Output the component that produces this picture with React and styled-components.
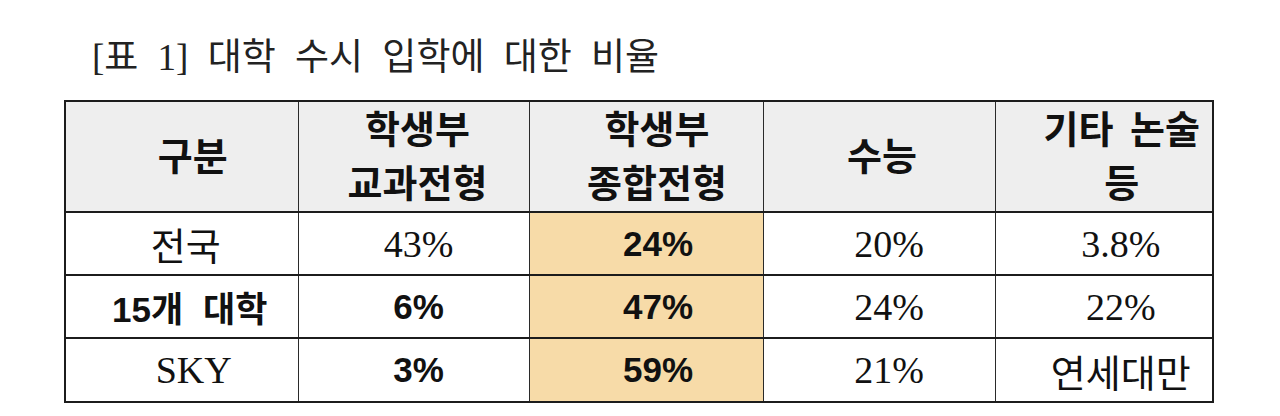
import React from "react";
import styled, { createGlobalStyle } from "styled-components";

const GlobalStyle = createGlobalStyle`
  html, body {
    margin: 0;
    padding: 0;
    background: #ffffff;
  }
`;

const Page = styled.div`
  width: 1280px;
  height: 416px;
  padding-left: 64px;
  box-sizing: border-box;
  overflow: hidden;
`;

const Title = styled.h1`
  margin: 0;
  height: 100px;
  box-sizing: border-box;
  padding: 38px 0 0 28px;
  font-family: "Liberation Serif", "Noto Sans CJK KR", serif;
  font-weight: 400;
  font-size: 37px;
  line-height: 40px;
  word-spacing: 10px;
  color: #222;
`;

const Table = styled.table`
  width: 1148px;
  table-layout: fixed;
  border-collapse: collapse;
  border: 2px solid #1c1c1c;
  color: #111;
`;

const Row = styled.tr`
  height: ${(p) => p.$h}px;
`;

const HeadCell = styled.th`
  background: #eeeeee;
  border-left: 1px solid #2a2a2a;
  border-right: 1px solid #2a2a2a;
  border-bottom: 2px solid #1c1c1c;
  padding: 0 0 0 ${(p) => p.$shift || 0}px;
  font-family: "Liberation Sans", "Noto Sans CJK KR", sans-serif;
  font-weight: 700;
  font-size: 38px;
  line-height: 54px;
  word-spacing: 6px;
  text-align: center;
  vertical-align: middle;
  white-space: nowrap;
`;

const Cell = styled.td`
  background: ${(p) => (p.$accent ? "#f7dba8" : "#ffffff")};
  border-left: 1px solid #2a2a2a;
  border-right: 1px solid #2a2a2a;
  border-bottom: 2px solid #1c1c1c;
  padding: 0 0 0 ${(p) => p.$shift || 0}px;
  font-family: ${(p) =>
    p.$bold
      ? `"Liberation Sans", "Noto Sans CJK KR", sans-serif`
      : `"Liberation Serif", "Noto Sans CJK KR", serif`};
  font-weight: ${(p) => (p.$bold ? 700 : 400)};
  font-size: ${(p) => (p.$bold ? 35 : 38)}px;
  word-spacing: ${(p) => (p.$bold ? 10 : 0)}px;
  text-align: center;
  vertical-align: middle;
  white-space: nowrap;
`;

const widths = [233, 231, 234, 232, 218];

const rows = [
  { name: "전국", nameBold: false, nameShift: 8, a: "43%", aBold: false, b: "24%", c: "20%", d: "3.8%" },
  { name: "15개 대학", nameBold: true, nameShift: 16, a: "6%", aBold: true, b: "47%", c: "24%", d: "22%" },
  { name: "SKY", nameBold: false, nameShift: 24, a: "3%", aBold: true, b: "59%", c: "21%", d: "연세대만" },
];

const App = () => {
  return (
    <Page>
      <GlobalStyle />
      <Title>[표 1] 대학 수시 입학에 대한 비율</Title>
      <Table>
        <colgroup>
          {widths.map((w, i) => (
            <col key={i} style={{ width: w }} />
          ))}
        </colgroup>
        <thead>
          <Row $h={111}>
            <HeadCell $shift={22}>구분</HeadCell>
            <HeadCell $shift={8}>
              학생부
              <br />
              교과전형
            </HeadCell>
            <HeadCell $shift={22}>
              학생부
              <br />
              종합전형
            </HeadCell>
            <HeadCell $shift={6}>수능</HeadCell>
            <HeadCell $shift={36}>
              기타 논술
              <br />
              등
            </HeadCell>
          </Row>
        </thead>
        <tbody>
          {rows.map((r, i) => (
            <Row key={i} $h={i === 2 ? 64 : 63}>
              <Cell $bold={r.nameBold} $shift={r.nameShift}>
                {r.name}
              </Cell>
              <Cell $bold={r.aBold} $shift={10}>
                {r.a}
              </Cell>
              <Cell $bold $accent $shift={24}>
                {r.b}
              </Cell>
              <Cell $shift={20}>{r.c}</Cell>
              <Cell $shift={34}>{r.d}</Cell>
            </Row>
          ))}
        </tbody>
      </Table>
    </Page>
  );
};

export default App;
